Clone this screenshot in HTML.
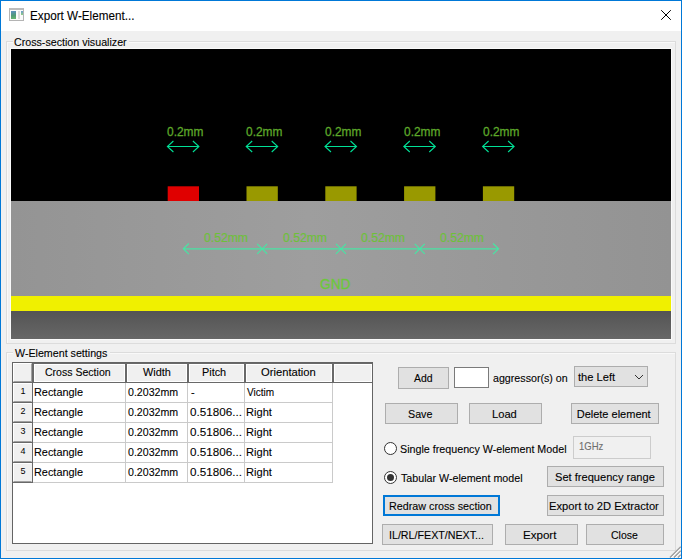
<!DOCTYPE html>
<html><head><meta charset="utf-8">
<style>
html,body{margin:0;padding:0;}
body{width:682px;height:559px;overflow:hidden;position:relative;background:#f0f0f0;font-family:"Liberation Sans",sans-serif;font-size:12px;color:#000;}
.a{position:absolute;box-sizing:border-box;}
.t{position:absolute;white-space:nowrap;line-height:14px;font-size:12px;transform-origin:0 0;font-family:"Liberation Sans",sans-serif;-webkit-text-stroke:0.1px currentColor;}
.btn{position:absolute;box-sizing:border-box;background:#e1e1e1;border:1px solid #adadad;}
.gb{position:absolute;box-sizing:border-box;border:1px solid #dcdcdc;box-shadow:inset 1px 1px 0 #f9f9f9;}
.gbt{position:absolute;background:#f0f0f0;height:12px;}
.hc{position:absolute;box-sizing:border-box;background:#f0f0f0;border:1px solid #fff;}
.rh{position:absolute;box-sizing:border-box;background:#f0f0f0;border-top:1px solid #fff;border-left:1px solid #fff;border-right:1px solid #f0f0f0;border-bottom:1px solid #a0a0a0;}
.gl{position:absolute;background:#cacaca;}
.rn{position:absolute;font-size:9px;line-height:9px;color:#000;}
</style></head><body>
<!-- window frame -->
<div class="a" style="left:0;top:0;width:682px;height:559px;border:1px solid #0078d7;"></div>
<div class="a" style="left:1px;top:1px;width:680px;height:30px;background:#fff;"></div>
<!-- icon -->
<div class="a" style="left:9px;top:8px;width:15px;height:13px;border:1px solid #b4b4b4;border-top:2px solid #bcbcbc;background:#fbfbfb;"></div>
<div class="a" style="left:11px;top:11px;width:5px;height:8px;background:linear-gradient(170deg,#5d8fc4,#4f9a78 55%,#68b870);"></div>
<div class="a" style="left:18px;top:11px;width:2px;height:8px;background:#dcdcdc;"></div>
<div class="a" style="left:21px;top:11px;width:2px;height:4px;background:linear-gradient(#6a9ad0,#8fcf80);"></div>
<!-- close X -->
<svg class="a" style="left:660px;top:9px" width="12" height="12" viewBox="0 0 12 12"><path d="M1.2 1.2L10.8 10.8M10.8 1.2L1.2 10.8" stroke="#000" stroke-width="1" fill="none"/></svg>

<!-- group 1 -->
<div class="gb" style="left:6px;top:41px;width:670px;height:303px;"></div>
<div class="gbt" style="left:13px;top:36px;width:116px;"></div>
<!-- canvas frame -->
<div class="a" style="left:10px;top:48px;width:662px;height:292px;border:1px solid #fafafa;background:#000;"></div>
<svg class="a" style="left:0;top:0" width="682" height="559" viewBox="0 0 682 559">
<defs><linearGradient id="dk" x1="0" y1="0" x2="0" y2="1"><stop offset="0" stop-color="#545454"/><stop offset="1" stop-color="#676767"/></linearGradient><linearGradient id="gr" x1="0" y1="0" x2="1" y2="0"><stop offset="0" stop-color="#949494"/><stop offset="0.45" stop-color="#9e9e9e"/><stop offset="1" stop-color="#939393"/></linearGradient></defs>
<rect x="11" y="49" width="660" height="152" fill="#000"/>
<rect x="11" y="201" width="660" height="95" fill="url(#gr)"/>
<rect x="11" y="296" width="660" height="15" fill="#f0f000"/>
<rect x="11" y="311" width="660" height="28" fill="url(#dk)"/>
<rect x="167.70" y="186.3" width="31.3" height="14.7" fill="#e00000"/>
<rect x="246.50" y="186.3" width="31.3" height="14.7" fill="#999900"/>
<rect x="325.30" y="186.3" width="31.3" height="14.7" fill="#999900"/>
<rect x="404.10" y="186.3" width="31.3" height="14.7" fill="#999900"/>
<rect x="482.90" y="186.3" width="31.3" height="14.7" fill="#999900"/>
<path d="M167.40 146.5H198.90M173.40 141.0L167.40 146.5L173.40 152.0M192.90 141.0L198.90 146.5L192.90 152.0" stroke="#00e096" stroke-width="1.1" fill="none"/>
<path d="M246.20 146.5H277.70M252.20 141.0L246.20 146.5L252.20 152.0M271.70 141.0L277.70 146.5L271.70 152.0" stroke="#00e096" stroke-width="1.1" fill="none"/>
<path d="M325.00 146.5H356.50M331.00 141.0L325.00 146.5L331.00 152.0M350.50 141.0L356.50 146.5L350.50 152.0" stroke="#00e096" stroke-width="1.1" fill="none"/>
<path d="M403.80 146.5H435.30M409.80 141.0L403.80 146.5L409.80 152.0M429.30 141.0L435.30 146.5L429.30 152.0" stroke="#00e096" stroke-width="1.1" fill="none"/>
<path d="M482.60 146.5H514.10M488.60 141.0L482.60 146.5L488.60 152.0M508.10 141.0L514.10 146.5L508.10 152.0" stroke="#00e096" stroke-width="1.1" fill="none"/>
<path d="M183.35 248.8H498.55M188.85 243.5L183.35 248.8L188.85 254.10000000000002M493.05 243.5L498.55 248.8L493.05 254.10000000000002M257.15 243.8L267.15 253.8M267.15 243.8L257.15 253.8M335.95 243.8L345.95 253.8M345.95 243.8L335.95 253.8M414.75 243.8L424.75 253.8M424.75 243.8L414.75 253.8" stroke="#48e4a4" stroke-width="1.2" fill="none"/>
</svg>

<!-- group 2 -->
<div class="gb" style="left:6px;top:352px;width:670px;height:199px;"></div>
<div class="gbt" style="left:13px;top:347px;width:97px;"></div>

<!-- table -->
<div class="a" style="left:12px;top:362px;width:361px;height:182px;border:1px solid #646464;background:#fff;"></div>
<div class="a" style="left:13px;top:363px;width:359px;height:20px;background:#696969;"></div>
<div class="hc" style="left:13px;top:363px;width:19px;height:19px;border-right-color:#a0a0a0;border-bottom-color:#a0a0a0;"></div>
<div class="hc" style="left:34px;top:364px;width:91px;height:18px;"></div>
<div class="hc" style="left:127px;top:364px;width:60px;height:18px;"></div>
<div class="hc" style="left:189px;top:364px;width:55px;height:18px;"></div>
<div class="hc" style="left:246px;top:364px;width:86px;height:18px;"></div>
<div class="hc" style="left:334px;top:364px;width:38px;height:18px;"></div>
<!-- row headers -->
<div class="a" style="left:13px;top:383px;width:20px;height:100px;background:#696969;"></div>
<div class="rh" style="left:13px;top:383px;width:19px;height:19px;"></div>
<div class="rh" style="left:13px;top:403px;width:19px;height:19px;"></div>
<div class="rh" style="left:13px;top:423px;width:19px;height:19px;"></div>
<div class="rh" style="left:13px;top:443px;width:19px;height:19px;"></div>
<div class="rh" style="left:13px;top:463px;width:19px;height:19px;"></div>
<!-- grid -->
<div class="gl" style="left:33px;top:402px;width:300px;height:1px;"></div>
<div class="gl" style="left:33px;top:422px;width:300px;height:1px;"></div>
<div class="gl" style="left:33px;top:442px;width:300px;height:1px;"></div>
<div class="gl" style="left:33px;top:462px;width:300px;height:1px;"></div>
<div class="gl" style="left:33px;top:482px;width:300px;height:1px;"></div>
<div class="gl" style="left:125px;top:383px;width:1px;height:100px;"></div>
<div class="gl" style="left:187px;top:383px;width:1px;height:100px;"></div>
<div class="gl" style="left:244px;top:383px;width:1px;height:100px;"></div>
<div class="gl" style="left:332px;top:383px;width:1px;height:100px;"></div>
<div class="rn" style="left:20.5px;top:386.5px;">1</div>
<div class="rn" style="left:20.5px;top:406.5px;">2</div>
<div class="rn" style="left:20.5px;top:426.5px;">3</div>
<div class="rn" style="left:20.5px;top:446.5px;">4</div>
<div class="rn" style="left:20.5px;top:466.5px;">5</div>

<!-- controls -->
<div class="btn" style="left:398px;top:367px;width:51px;height:22px;"></div>
<div class="a" style="left:454px;top:367px;width:35px;height:21px;border:1px solid #7a7a7a;background:#fff;"></div>
<div class="btn" style="left:574px;top:366px;width:74px;height:21px;"></div>
<svg class="a" style="left:634px;top:373px" width="10" height="7" viewBox="0 0 10 7"><path d="M1 2L5 6L9 2" stroke="#333" stroke-width="1" fill="none"/></svg>
<div class="btn" style="left:385px;top:403px;width:73px;height:21px;"></div>
<div class="btn" style="left:469px;top:403px;width:73px;height:21px;"></div>
<div class="btn" style="left:571px;top:403px;width:88px;height:21px;"></div>
<!-- radios -->
<div class="a" style="left:384px;top:442px;width:13px;height:13px;border-radius:50%;border:1px solid #333;background:#fff;"></div>
<div class="a" style="left:573px;top:436px;width:78px;height:23px;border:1px solid #cccccc;background:#f0f0f0;"></div>
<div class="a" style="left:384px;top:471px;width:13px;height:13px;border-radius:50%;border:1px solid #333;background:#fff;"></div>
<div class="a" style="left:387px;top:474px;width:7px;height:7px;border-radius:50%;background:#333;"></div>
<div class="btn" style="left:547px;top:466px;width:117px;height:21px;"></div>
<div class="btn" style="left:383px;top:495px;width:117px;height:21px;border:2px solid #0078d7;"></div>
<div class="btn" style="left:547px;top:495px;width:117px;height:21px;"></div>
<div class="btn" style="left:382px;top:524px;width:111px;height:21px;"></div>
<div class="btn" style="left:505px;top:524px;width:73px;height:21px;"></div>
<div class="btn" style="left:586px;top:524px;width:78px;height:21px;"></div>
<!-- size grip -->
<svg class="a" style="left:668px;top:545px" width="13" height="13" viewBox="0 0 13 13"><path d="M2 12.5L12.8 1.7M6 12.5L12.8 5.7M10 12.5L12.8 9.7" stroke="#a0a0a0" stroke-width="1.5" fill="none"/><path d="M3.3 12.8L12.8 3.3M7.3 12.8L12.8 7.3M11.3 12.8L12.8 11.3" stroke="#fff" stroke-width="0.9" fill="none"/></svg>

<div class="t" style="left:29.82px;top:9.00px;font-size:12px;color:#000;transform:scaleX(0.9752);">Export W-Element...</div>
<div class="t" style="left:13.53px;top:35.00px;font-size:11px;color:#000;transform:scaleX(0.9696);">Cross-section visualizer</div>
<div class="t" style="left:14.90px;top:346.00px;font-size:11px;color:#000;transform:scaleX(0.9705);">W-Element settings</div>
<div class="t" style="left:45.04px;top:365.00px;font-size:11px;color:#000;transform:scaleX(0.9582);">Cross Section</div>
<div class="t" style="left:142.60px;top:365.00px;font-size:11px;color:#000;transform:scaleX(0.9893);">Width</div>
<div class="t" style="left:202.31px;top:365.00px;font-size:11px;color:#000;transform:scaleX(0.9870);">Pitch</div>
<div class="t" style="left:261.20px;top:365.00px;font-size:11px;color:#000;transform:scaleX(1.0189);">Orientation</div>
<div class="t" style="left:33.61px;top:384.80px;font-size:11px;color:#000;transform:scaleX(0.9896);">Rectangle</div>
<div class="t" style="left:127.60px;top:384.80px;font-size:11px;color:#000;transform:scaleX(0.9647);">0.2032mm</div>
<div class="t" style="left:190.90px;top:384.80px;font-size:11px;color:#000;">-</div>
<div class="t" style="left:246.50px;top:384.80px;font-size:11px;color:#000;transform:scaleX(0.9138);">Victim</div>
<div class="t" style="left:33.61px;top:404.80px;font-size:11px;color:#000;transform:scaleX(0.9896);">Rectangle</div>
<div class="t" style="left:127.60px;top:404.80px;font-size:11px;color:#000;transform:scaleX(0.9647);">0.2032mm</div>
<div class="t" style="left:189.60px;top:404.80px;font-size:11px;color:#000;transform:scaleX(1.0604);">0.51806...</div>
<div class="t" style="left:245.89px;top:404.80px;font-size:11px;color:#000;transform:scaleX(1.0080);">Right</div>
<div class="t" style="left:33.61px;top:424.80px;font-size:11px;color:#000;transform:scaleX(0.9896);">Rectangle</div>
<div class="t" style="left:127.60px;top:424.80px;font-size:11px;color:#000;transform:scaleX(0.9647);">0.2032mm</div>
<div class="t" style="left:189.60px;top:424.80px;font-size:11px;color:#000;transform:scaleX(1.0604);">0.51806...</div>
<div class="t" style="left:245.89px;top:424.80px;font-size:11px;color:#000;transform:scaleX(1.0080);">Right</div>
<div class="t" style="left:33.61px;top:444.80px;font-size:11px;color:#000;transform:scaleX(0.9896);">Rectangle</div>
<div class="t" style="left:127.60px;top:444.80px;font-size:11px;color:#000;transform:scaleX(0.9647);">0.2032mm</div>
<div class="t" style="left:189.60px;top:444.80px;font-size:11px;color:#000;transform:scaleX(1.0604);">0.51806...</div>
<div class="t" style="left:245.89px;top:444.80px;font-size:11px;color:#000;transform:scaleX(1.0080);">Right</div>
<div class="t" style="left:33.61px;top:464.80px;font-size:11px;color:#000;transform:scaleX(0.9896);">Rectangle</div>
<div class="t" style="left:127.60px;top:464.80px;font-size:11px;color:#000;transform:scaleX(0.9647);">0.2032mm</div>
<div class="t" style="left:189.60px;top:464.80px;font-size:11px;color:#000;transform:scaleX(1.0604);">0.51806...</div>
<div class="t" style="left:245.89px;top:464.80px;font-size:11px;color:#000;transform:scaleX(1.0080);">Right</div>
<div class="t" style="left:414.00px;top:371.00px;font-size:11px;color:#000;transform:scaleX(0.9474);">Add</div>
<div class="t" style="left:493.20px;top:371.00px;font-size:11px;color:#000;transform:scaleX(0.9701);">aggressor(s) on</div>
<div class="t" style="left:578.20px;top:370.00px;font-size:11px;color:#000;transform:scaleX(1.0108);">the Left</div>
<div class="t" style="left:407.92px;top:406.50px;font-size:11px;color:#000;transform:scaleX(0.9750);">Save</div>
<div class="t" style="left:491.69px;top:406.50px;font-size:11px;color:#000;transform:scaleX(1.0130);">Load</div>
<div class="t" style="left:576.70px;top:406.50px;font-size:11px;color:#000;">Delete element</div>
<div class="t" style="left:399.63px;top:441.80px;font-size:11px;color:#000;transform:scaleX(0.9740);">Single frequency W-element Model</div>
<div class="t" style="left:579.14px;top:439.00px;font-size:11px;color:#6d6d6d;transform:scaleX(0.8630);">1GHz</div>
<div class="t" style="left:400.60px;top:470.80px;font-size:11px;color:#000;transform:scaleX(0.9712);">Tabular W-element model</div>
<div class="t" style="left:554.59px;top:470.00px;font-size:11px;color:#000;transform:scaleX(1.0082);">Set frequency range</div>
<div class="t" style="left:388.52px;top:499.00px;font-size:11px;color:#000;transform:scaleX(0.9769);">Redraw cross section</div>
<div class="t" style="left:549.49px;top:499.00px;font-size:11px;color:#000;transform:scaleX(1.0150);">Export to 2D Extractor</div>
<div class="t" style="left:388.83px;top:528.00px;font-size:11px;color:#000;transform:scaleX(0.9708);">IL/RL/FEXT/NEXT...</div>
<div class="t" style="left:523.25px;top:528.00px;font-size:11px;color:#000;transform:scaleX(1.0516);">Export</div>
<div class="t" style="left:610.55px;top:528.00px;font-size:11px;color:#000;transform:scaleX(0.9519);">Close</div>
<div class="t" style="left:167.40px;top:125.30px;font-size:13.5px;color:#5ea82a;transform:scaleX(0.8829);-webkit-text-stroke:0.3px #5ea82a;">0.2mm</div>
<div class="t" style="left:246.20px;top:125.30px;font-size:13.5px;color:#5ea82a;transform:scaleX(0.8829);-webkit-text-stroke:0.3px #5ea82a;">0.2mm</div>
<div class="t" style="left:325.00px;top:125.30px;font-size:13.5px;color:#5ea82a;transform:scaleX(0.8829);-webkit-text-stroke:0.3px #5ea82a;">0.2mm</div>
<div class="t" style="left:403.80px;top:125.30px;font-size:13.5px;color:#5ea82a;transform:scaleX(0.8829);-webkit-text-stroke:0.3px #5ea82a;">0.2mm</div>
<div class="t" style="left:482.60px;top:125.30px;font-size:13.5px;color:#5ea82a;transform:scaleX(0.8829);-webkit-text-stroke:0.3px #5ea82a;">0.2mm</div>
<div class="t" style="left:203.75px;top:230.60px;font-size:13px;color:#6ec03a;transform:scaleX(0.9348);-webkit-text-stroke:0.2px #6ec03a;">0.52mm</div>
<div class="t" style="left:282.55px;top:230.60px;font-size:13px;color:#6ec03a;transform:scaleX(0.9348);-webkit-text-stroke:0.2px #6ec03a;">0.52mm</div>
<div class="t" style="left:361.35px;top:230.60px;font-size:13px;color:#6ec03a;transform:scaleX(0.9348);-webkit-text-stroke:0.2px #6ec03a;">0.52mm</div>
<div class="t" style="left:440.15px;top:230.60px;font-size:13px;color:#6ec03a;transform:scaleX(0.9348);-webkit-text-stroke:0.2px #6ec03a;">0.52mm</div>
<div class="t" style="left:319.92px;top:277.20px;font-size:14px;color:#6cc83a;transform:scaleX(0.9767);-webkit-text-stroke:0.3px #6cc83a;">GND</div>
</body></html>
